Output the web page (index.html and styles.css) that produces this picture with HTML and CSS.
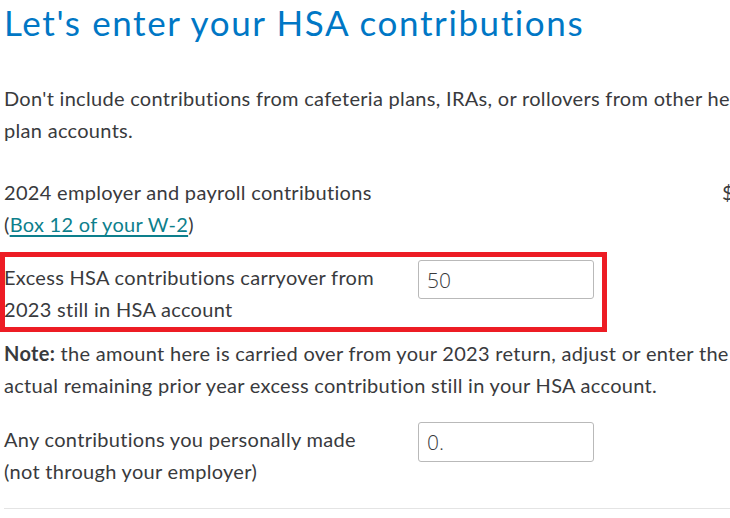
FILE: index.html
```html
<!DOCTYPE html>
<html lang="en">
<head>
<meta charset="utf-8">
<title>HSA contributions</title>
<link rel="stylesheet" href="styles.css">
</head>
<body>
<div class="page">
  <h1 class="title">Let's enter your HSA contributions</h1>
  <p class="intro">Don't include contributions from cafeteria plans, IRAs, or rollovers from other health savings plan accounts.</p>

  <div class="row row-employer">
    <div class="label">2024 employer and payroll contributions<br>(<a href="#" class="link">Box 12 of your W-2</a>)</div>
    <div class="dollar">$</div>
    <input class="field" type="text" value="">
  </div>

  <div class="row row-excess">
    <div class="label">Excess HSA contributions carryover from 2023 still in HSA account</div>
    <input class="field" type="text" value="50">
    <div class="highlight"></div>
  </div>

  <p class="note"><strong>Note:</strong> the amount here is carried over from your 2023 return, adjust or enter the actual remaining prior year excess contribution still in your HSA account.</p>

  <div class="row row-personal">
    <div class="label">Any contributions you personally made (not through your employer)</div>
    <input class="field" type="text" value="0.">
  </div>

  <div class="divider"></div>
</div>
</body>
</html>
```
FILE: styles.css
```css
html, body {
  margin: 0;
  padding: 0;
  background: #ffffff;
  overflow: hidden;
}

.page {
  width: 900px;
  padding-left: 4px;
  font-family: "Lato", "Open Sans", sans-serif;
  font-size: 20px;
  letter-spacing: 0.3px;
  line-height: 32px;
  color: #393a3d;
}

.title {
  margin: 0;
  font-size: 35px;
  letter-spacing: 1.6px;
  line-height: 44px;
  font-weight: 400;
  color: #0077c5;
}

.intro {
  width: 860px;
  margin: 38px 0 0 0;
}

.row {
  display: grid;
  grid-template-columns: 390px 176px;
  column-gap: 24px;
  align-items: start;
}

.label {
  width: 388px;
}

.row-employer {
  margin-top: 30px;
  grid-template-columns: 714px auto 176px;
  column-gap: 4px;
}

.row-employer .label {
  width: 420px;
}

.link {
  color: #0d7f8c;
  text-decoration: underline;
  text-underline-offset: 3px;
}

.row-excess {
  position: relative;
  margin-top: 21px;
}

.row-personal {
  margin-top: 22px;
}

.field {
  box-sizing: border-box;
  width: 176px;
  height: 39px;
  margin: -1px 0 0 0;
  padding: 0 8px;
  border: 1px solid #b9b9b9;
  border-radius: 3px;
  font-family: "Open Sans", sans-serif;
  font-weight: 300;
  font-size: 21px;
  letter-spacing: 0;
  color: #393a3d;
  background: #fff;
}

.row-personal .field {
  height: 40px;
}

.highlight {
  position: absolute;
  left: -4px;
  top: -9px;
  width: 607px;
  height: 80px;
  box-sizing: border-box;
  border: 5px solid #ed1c24;
  pointer-events: none;
}

.note {
  width: 740px;
  margin: 12px 0 0 0;
}

.note strong {
  font-weight: 700;
}

.divider {
  margin-top: 21px;
  height: 1px;
  background: #e4e4e4;
  width: 900px;
}
```
